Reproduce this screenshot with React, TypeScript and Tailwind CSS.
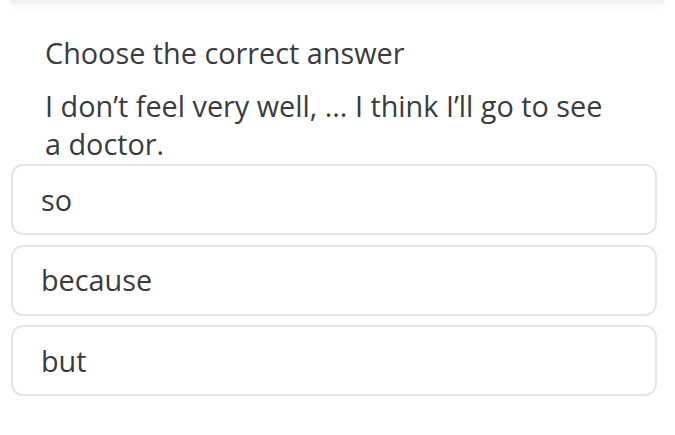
import React from "react";

export default function App() {
  const options = ["so", "because", "but"];
  return (
    <div
      className="w-[675px] h-[435px] bg-white overflow-hidden text-[#3a3b3d]"
      style={{ fontFamily: '"Open Sans", sans-serif' }}
    >
      <div className="mx-[10px] h-[4px] bg-[#f1f1f6] rounded-b-[8px] shadow-[0_4px_10px_rgba(230,235,200,0.35)]" />
      <div className="pl-[45px] pr-[65px] pt-[30px]">
        <div className="text-[28.8px] leading-[38px]">Choose the correct answer</div>
        <div className="mt-[15px] text-[28.8px] leading-[38px]">
          I don’t feel very well, ... I think I’ll go to see a doctor.
        </div>
      </div>
      <div className="mt-[1px] pl-[11px] pr-[18px] flex flex-col gap-[9.5px]">
        {options.map((o) => (
          <div
            key={o}
            className="h-[71px] border-2 border-[#e5e5e5] rounded-[12px] flex items-center px-[28px] text-[28.8px] leading-[38px]"
          >
            {o}
          </div>
        ))}
      </div>
    </div>
  );
}
